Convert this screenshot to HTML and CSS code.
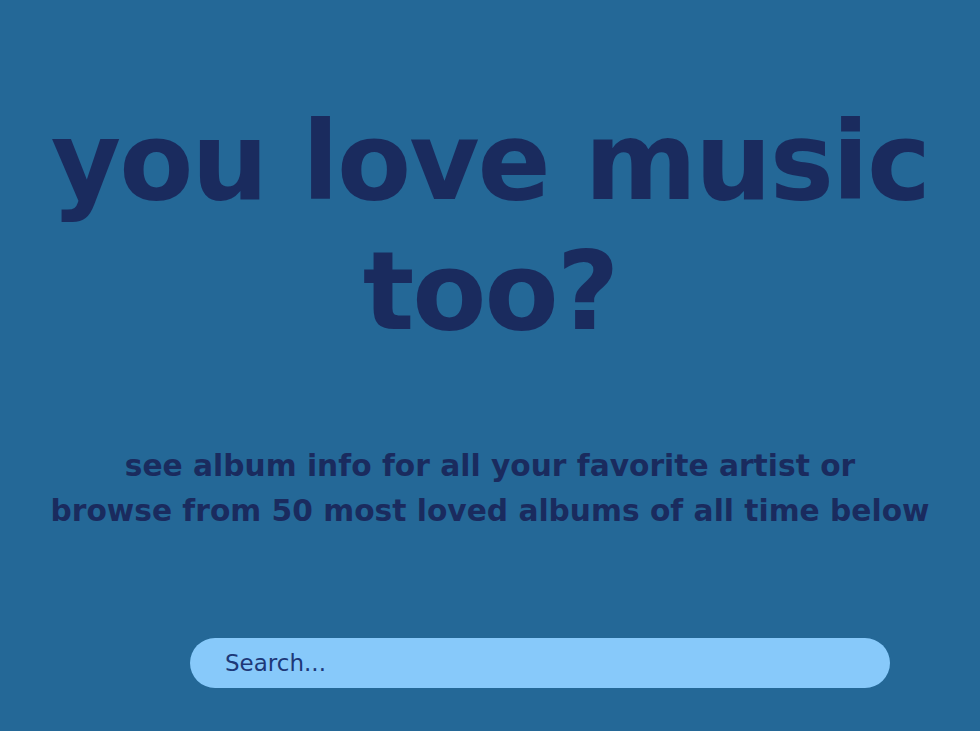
FILE: index.html
```html
<!DOCTYPE html>
<html lang="en">
<head>
<meta charset="utf-8">
<title>you love music too?</title>
<link rel="stylesheet" href="styles.css">
</head>
<body>
<main class="hero">
  <h1 class="hero-title">you love music<br>too?</h1>
  <p class="hero-sub">see album info for all your favorite artist or<br>browse from 50 most loved albums of all time below</p>
  <form class="search">
    <input class="search-input" type="text" placeholder="Search...">
  </form>
</main>
</body>
</html>
```
FILE: styles.css
```css
html, body {
  margin: 0;
  padding: 0;
  background: #246897;
}
body {
  font-family: "DejaVu Sans", sans-serif;
  color: #1a2b5e;
  width: 980px;
  height: 731px;
  overflow: hidden;
}
.hero {
  display: flex;
  flex-direction: column;
  align-items: center;
  padding-top: 97px;
}
.hero-title {
  margin: 0;
  font-size: 108px;
  line-height: 130px;
  font-weight: 700;
  text-align: center;
  letter-spacing: -2px;
}
.hero-sub {
  margin: 86px 0 0;
  font-size: 29.7px;
  line-height: 45px;
  font-weight: 700;
  text-align: center;
}
.search {
  margin: 105px 0 0 100px;
  width: 700px;
}
.search-input {
  box-sizing: border-box;
  width: 700px;
  height: 50px;
  border: none;
  border-radius: 25px;
  background: #87c9fa;
  padding: 0 35px;
  font-family: "DejaVu Sans", sans-serif;
  font-size: 23px;
  color: #1a2b5e;
  outline: none;
}
.search-input::placeholder {
  color: #1d3878;
  opacity: 1;
}
```
